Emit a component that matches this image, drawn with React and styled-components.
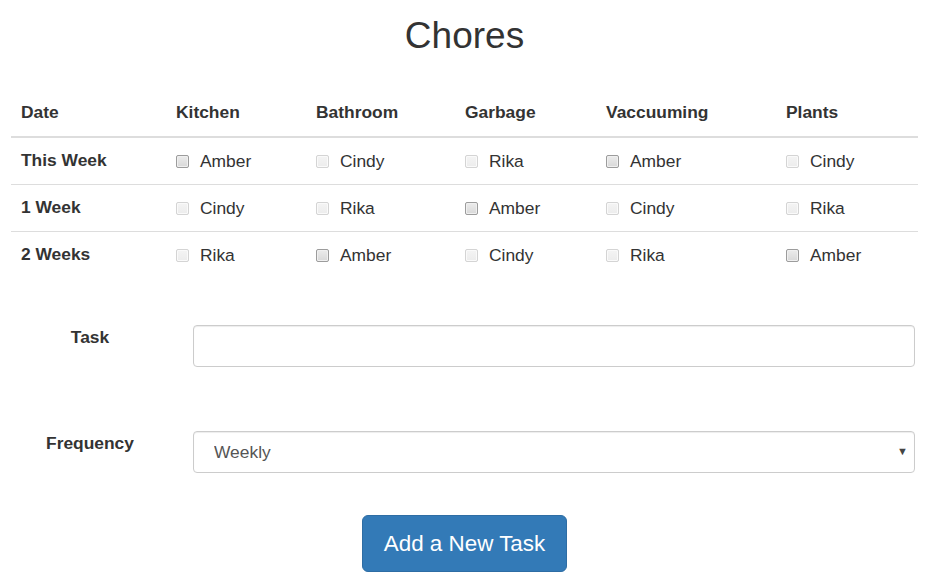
import React from "react";
import styled, { createGlobalStyle } from "styled-components";

const Global = createGlobalStyle`
  html, body { margin: 0; padding: 0; background: #fff; }
  body {
    font-family: "Liberation Sans", Arial, sans-serif;
    font-size: 17.4px;
    line-height: 1.42857;
    color: #333;
  }
  * { box-sizing: border-box; }
`;

const Page = styled.div`
  width: 933px;
  padding: 0 15px 0 11px;
`;

const Title = styled.h1`
  margin: 16px 0 33px;
  font-size: 37px;
  font-weight: 400;
  line-height: 40px;
  text-align: center;
  color: #333;
`;

const Table = styled.table`
  width: 907px;
  border-collapse: collapse;
  border-spacing: 0;
  table-layout: fixed;
`;

const Th = styled.th`
  text-align: left;
  font-weight: 700;
  padding: 11px 10px 12px;
  line-height: 24px;
  border-bottom: 2px solid #ddd;
  width: ${(p) => p.$w}px;
`;

const Tr = styled.tr`
  & + & td, & + & th { border-top: 1px solid #ddd; }
`;

const RowHead = styled.th`
  text-align: left;
  font-weight: 700;
  padding: 10px 10px 12px;
  height: 46px;
  line-height: 24px;
  vertical-align: top;
`;

const Td = styled.td`
  padding: 10px 10px 12px;
  height: 46px;
  line-height: 24px;
  vertical-align: top;
`;

const Label = styled.label`
  display: flex;
  align-items: center;
  height: 24px;
  padding-top: 2px;
`;

const Box = styled.input.attrs({ type: "checkbox" })`
  appearance: none;
  -webkit-appearance: none;
  flex: none;
  margin: 0 11px 0 0;
  width: 13px;
  height: 13px;
  border-radius: 2px;
  border: 1px solid ${(p) => (p.disabled ? "#d4d4d4" : "#9c9c9c")};
  background: ${(p) =>
    p.disabled
      ? "linear-gradient(#f4f4f4, #ececec)"
      : "linear-gradient(#ececec, #d8d8d8)"};
  box-shadow: inset 0 0 0 1px ${(p) => (p.disabled ? "#fafafa" : "#f0f0f0")};
`;

const Form = styled.form`
  margin-top: 47px;
  display: flex;
  flex-direction: column;
  gap: 64px;
`;

const FormRow = styled.div`
  display: flex;
  align-items: flex-start;
`;

const FormLabel = styled.label`
  width: 158px;
  flex: none;
  text-align: center;
  font-weight: 700;
  line-height: 24px;
`;

const Control = styled.div`
  margin-left: 24px;
  width: 722px;
  position: relative;
`;

const TextInput = styled.input`
  display: block;
  width: 100%;
  height: 42px;
  border: 1px solid #ccc;
  border-radius: 4px;
  box-shadow: inset 0 1px 1px rgba(0, 0, 0, 0.075);
  padding: 6px 20px;
  font: inherit;
  color: #555;
  background: #fff;
`;

const Select = styled.select`
  display: block;
  width: 100%;
  height: 42px;
  border: 1px solid #ccc;
  border-radius: 4px;
  box-shadow: inset 0 1px 1px rgba(0, 0, 0, 0.075);
  padding: 6px 20px;
  font: inherit;
  color: #555;
  background: #fff;
  appearance: none;
  -webkit-appearance: none;
`;

const Arrow = styled.span`
  position: absolute;
  right: 7px;
  top: 13px;
  font-size: 11px;
  color: #444;
  pointer-events: none;
`;

const ButtonRow = styled.div`
  display: flex;
  justify-content: center;
  margin-top: 42px;
`;

const Button = styled.button`
  background: #337ab7;
  border: 1px solid #2e6da4;
  color: #fff;
  border-radius: 6px;
  font-family: inherit;
  font-size: 22.4px;
  line-height: 1.3333;
  padding: 12px 20px;
  height: 57px;
  width: 205px;
  cursor: pointer;
`;

const cols = [
  { name: "Date", w: 155 },
  { name: "Kitchen", w: 140 },
  { name: "Bathroom", w: 149 },
  { name: "Garbage", w: 141 },
  { name: "Vaccuuming", w: 180 },
  { name: "Plants", w: 142 },
];

const rows = [
  {
    label: "This Week",
    cells: [
      ["Amber", true],
      ["Cindy", false],
      ["Rika", false],
      ["Amber", true],
      ["Cindy", false],
    ],
  },
  {
    label: "1 Week",
    cells: [
      ["Cindy", false],
      ["Rika", false],
      ["Amber", true],
      ["Cindy", false],
      ["Rika", false],
    ],
  },
  {
    label: "2 Weeks",
    cells: [
      ["Rika", false],
      ["Amber", true],
      ["Cindy", false],
      ["Rika", false],
      ["Amber", true],
    ],
  },
];

export default function App() {
  return (
    <>
      <Global />
      <Page>
        <Title>Chores</Title>
        <Table>
          <thead>
            <tr>
              {cols.map((c) => (
                <Th key={c.name} $w={c.w}>
                  {c.name}
                </Th>
              ))}
            </tr>
          </thead>
          <tbody>
            {rows.map((r) => (
              <Tr key={r.label}>
                <RowHead>{r.label}</RowHead>
                {r.cells.map(([n, en], i) => (
                  <Td key={i}>
                    <Label>
                      <Box disabled={!en} />
                      {n}
                    </Label>
                  </Td>
                ))}
              </Tr>
            ))}
          </tbody>
        </Table>
        <Form onSubmit={(e) => e.preventDefault()}>
          <FormRow>
            <FormLabel>Task</FormLabel>
            <Control>
              <TextInput type="text" />
            </Control>
          </FormRow>
          <FormRow>
            <FormLabel>Frequency</FormLabel>
            <Control>
              <Select defaultValue="Weekly">
                <option>Weekly</option>
                <option>Biweekly</option>
                <option>Monthly</option>
              </Select>
              <Arrow>▼</Arrow>
            </Control>
          </FormRow>
        </Form>
        <ButtonRow>
          <Button type="button">Add a New Task</Button>
        </ButtonRow>
      </Page>
    </>
  );
}
